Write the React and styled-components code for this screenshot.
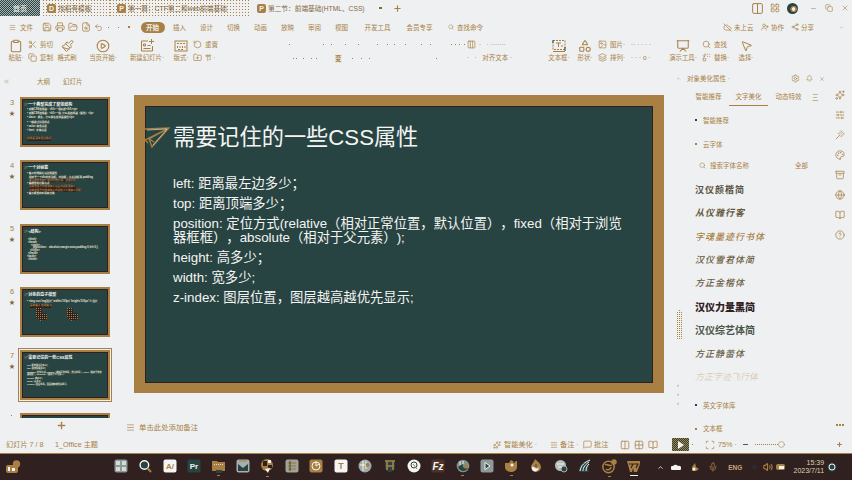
import React from "react";
import styled, { createGlobalStyle, css } from "styled-components";
import {
  Scissors, Copy, Clipboard, Paintbrush, CirclePlay, Save, Printer, FolderOpen, FileSearch, Undo2,
  Search, Settings, Bell, X, Minus, Plus, Presentation, MousePointer2, Image, Layers, Replace,
  CloudOff, UserPlus, Share2, Sparkles, SlidersHorizontal, Shapes, ChevronsLeft, ChevronUp,
  LayoutTemplate, RotateCcw, FolderPlus, LayoutGrid, Grid2x2, BookOpen, Columns2, Scan,
  MessageSquare, Palette, Archive, Globe, CircleHelp, Mic, Volume2, Wand, Circle, Menu, Wifi,
  Columns3,
} from "lucide-react";

const c = { bg: "#eef0f2", gold: "#a98044", teal: "#284442", dark: "#30201f", white: "#f4f4f3" };

const Global = createGlobalStyle`
  * { box-sizing: border-box; }
  body { margin: 0; overflow: hidden; background: ${c.bg}; }
  svg { display: block; flex: none; }
`;

const check = (a) => `repeating-conic-gradient(${a} 0 25%, transparent 0 50%) 0 0 / 2px 2px`;
const dots = (a, s) => `conic-gradient(from 0deg at 1px 1px, transparent 75%, ${a} 0) 0 0 / ${s}px ${s}px`;

const Window = styled.div`
  width: 852px; height: 480px; display: flex; flex-direction: column; overflow: hidden;
  background: ${c.bg}; color: ${c.gold};
  font: 6.5px/9px "Liberation Sans", "Noto Sans CJK SC", sans-serif; white-space: nowrap;
`;
const Row = styled.div`display: flex; align-items: center; flex: none; height: ${(p) => p.$h}px; margin-left: ${(p) => p.$ml || 0}px;`;
const Spacer = styled.div`flex: 1;`;
const Cell = styled.div`
  display: flex; align-items: center; flex: none; gap: ${(p) => p.$gap || 0}px;
  width: ${(p) => p.$w}px; margin-left: ${(p) => p.$ml || 0}px;
`;
const Dot = styled.i`width: ${(p) => p.$s || 1}px; height: ${(p) => p.$s || 1}px; flex: none; background: ${(p) => p.$c || c.gold}; margin-left: ${(p) => p.$ml || 0}px;`;

/* title bar */
const TitleBar = styled(Row)`height: 16px;`;
const HomeTab = styled.div`
  width: 40px; height: 16px; display: flex; align-items: center; justify-content: center; color: ${c.white};
  font-size: 7px; background: ${check(c.teal)}, #a9b3b4;
`;
const DocTab = styled.div`
  display: flex; align-items: center; gap: 2px; height: 16px; width: ${(p) => p.$w}px; margin-left: ${(p) => p.$ml || 0}px; padding-left: ${(p) => p.$pl}px; flex: none; font-size: 6.7px;
  background: ${(p) => (p.$idle ? dots(c.gold, 3) : "none")};
  & span { color: #85683f; }
`;
const FileMark = styled.b`
  width: 9px; height: 9px; border-radius: 2px; background: ${c.gold}; color: ${c.bg}; font-size: 7px; line-height: 9px; text-align: center; flex: none;
`;
const Avatar = styled.i`width: 11px; height: 11px; border-radius: 50%; background: radial-gradient(circle at 60% 55%, ${c.bg} 0 1.5px, ${c.gold} 2px 3px, ${c.teal} 3.5px); flex: none; margin-left: 7px;`;

/* menu */
const MenuTab = styled.div`
  width: ${(p) => p.$w || 27}px; height: 12px; display: flex; align-items: center; justify-content: center; flex: none;
  & span { ${(p) => p.$on && css`width: 24px; height: 11px; line-height: 11px; border-radius: 6px; text-align: center; background: ${c.gold}; color: ${c.bg}; font-weight: bold;`} }
`;

/* ribbon */
const Ribbon = styled.div`display: flex; height: 29px; flex: none; padding-top: 1px;`;
const BigTool = styled.div`
  display: flex; flex-direction: column; align-items: center; width: ${(p) => p.$w}px; margin-left: ${(p) => p.$ml || 0}px; flex: none; font-size: 6.4px;
  & svg { height: 14px; }
`;
const Stack = styled.div`display: flex; flex-direction: column; gap: 4px; width: ${(p) => p.$w}px; margin-left: ${(p) => p.$ml || 0}px; flex: none; padding-top: 1px;`;
const SmallTool = styled.div`display: flex; align-items: center; height: 9px; gap: 3px; & svg { width: 9px; height: 9px; }`;
const FontArea = styled.div`width: 260px; margin-left: 48px; flex: none; display: flex; flex-direction: column; gap: 5px; padding-top: 1px;`;
const Faint = styled.div`display: flex; align-items: center; height: 9px;`;

/* body */
const Body = styled.div`display: flex; flex: 1; min-height: 0;`;
const Outline = styled.div`width: 134px; display: flex; flex-direction: column; flex: none; height: 366px;`;
const ThumbRow = styled.div`display: flex; height: ${(p) => p.$h || 63.3}px; flex: none; overflow: ${(p) => (p.$on ? "visible" : "hidden")};`;
const ThumbNo = styled.div`
  width: 20px; padding: 2px 0 0 10px; color: ${c.gold}; font-size: 7.5px; display: flex; flex-direction: column; gap: 2px; line-height: 8px; flex: none;
  & small { font-size: 6px; margin-left: -1px; color: #85683f; }
`;
const Thumb = styled.div`
  width: 90px; height: 50px; border: 2px solid ${c.gold}; background: ${c.teal}; box-shadow: inset 0 0 0 1px ${c.dark}${(p) => (p.$on ? `, 0 0 0 1px ${c.bg}, 0 0 0 2px ${c.gold}` : "")};
  padding: 3px 0 0 2px; overflow: hidden; flex: none; color: ${c.white}; margin-top: 0.5px;
`;
const ThumbTitle = styled.div`display: flex; align-items: center; font-size: 4px; line-height: 6px; height: 6px; margin-bottom: ${(p) => p.$mb || 0}px; font-weight: bold;`;
const ThumbLine = styled.div`
  font-size: ${(p) => (p.$small ? 2.2 : 2.6)}px; line-height: 4px; height: ${(p) => p.$h || 4.2}px; font-weight: bold; margin-left: ${(p) => 3 + (p.$in || 0)}px; color: ${(p) => (p.$dim ? c.gold : "#f0e6d8")};
  & span { display: inline-block; ${(p) => p.$dim && css`background: ${c.dark}; line-height: 3.6px;`} }
`;
const Figure = styled.div`display: flex; gap: 20px; padding: 1px 0 0 12px; & i { width: 11px; height: 13px; clip-path: polygon(0 0, 50% 0, 55% 40%, 100% 40%, 100% 85%, 40% 100%, 0 70%); background: ${dots(c.gold, 2)}, ${c.dark}; }`;
const AddSlide = styled.div`display: flex; justify-content: center; width: 122px; height: 18px; align-items: center;`;

const Center = styled.div`width: 538px; display: flex; flex-direction: column; flex: none; padding-top: 28px;`;
const Slide = styled.div`
  width: 530px; height: 298px; border: solid ${c.gold}; border-width: 11px 11px 10px 11px; background: ${c.teal};
  box-shadow: inset 0 0 0 1px ${c.dark}; color: ${c.white}; flex: none;
`;
const SlideTitle = styled.div`display: flex; align-items: center; height: 30px; margin-top: 17px; font-size: 22.2px; line-height: 30px; text-spacing-trim: space-all; & svg { margin-right: 3px; }`;
const SlideBody = styled.div`margin: 24px 0 0 28px; font-size: 13.33px; line-height: 14px; text-spacing-trim: space-all; & p { margin: 0 0 6px; }`;
const Notes = styled(Row)`padding-top: 5px; font-size: 7.4px; gap: 4px; margin-left: -8px;`;

/* right panel */
const Side = styled.div`width: 176px; display: flex; flex-direction: column; flex: none; margin-top: 4px;`;
const SideTabs = styled.div`display: flex; height: 18px; margin: 2px 0 0 17px;`;
const SideTab = styled.div`width: 39px; margin-right: 1px; text-align: center; line-height: 17px; flex: none; border-bottom: ${(p) => (p.$on ? `1px solid ${c.gold}` : "0")};`;
const SideBody = styled.div`display: flex; flex: 1;`;
const Gutter = styled.div`width: 23px; padding-left: 5px; flex: none;`;
const ScrollThumb = styled.div`width: 5px; height: 30px; margin-top: 204px; border-radius: 3px; background: ${dots(c.gold, 2)};`;
const Ticks = styled.div`display: flex; flex-direction: column; gap: 2px; margin-top: 42px; line-height: 7px; font-size: 6px;`;
const List = styled.div`width: 138px; flex: none; padding-top: 2.5px;`;
const Section = styled.div`display: flex; align-items: center; gap: 6px; height: 23.7px;`;
const SearchRow = styled.div`display: flex; align-items: center; height: 20px; padding-left: 4px; margin-bottom: 3px;`;
const Fonts = styled.div`margin-bottom: 4px;`;
const FontItem = styled.div`
  height: 23.4px; line-height: 23.4px; padding-left: 0; font-size: ${(p) => p.$s || 9}px; letter-spacing: ${(p) => p.$ls ?? 1}px;
  color: ${(p) => p.$c || "#6b5d43"}; font-weight: ${(p) => p.$b || 500}; font-style: ${(p) => (p.$i ? "italic" : "normal")};
`;
const Rail = styled.div`width: 12px; height: 336px; display: flex; flex-direction: column; align-items: center; gap: 10px; margin: -16px 0 0 1px; flex: none;`;

/* status bar */
const Status = styled(Row)`height: 17px; font-size: 7.2px;`;
const PlayButton = styled.div`width: 17px; height: 13px; margin-left: 12px; display: grid; place-items: center; background: ${check(c.teal)}, ${c.gold}; flex: none;`;
const SliderLine = styled.i`width: 23px; height: 1px; background: ${dots(c.gold, 2)}; flex: none;`;

/* taskbar */
const Taskbar = styled.div`height: 27px; flex: none; display: flex; align-items: center; background: ${c.dark}; border-top: 1px solid ${c.gold}; color: ${c.white};`;
const TaskApps = styled.div`display: flex; margin-left: 84.5px;`;
const TaskApp = styled.div`
  width: 24.45px; height: 26px; display: flex; flex-direction: column; align-items: center; justify-content: center; flex: none; padding-bottom: 2px;
  &::after { content: ""; width: ${(p) => (p.$run ? (p.$on ? 8 : 3) : 0)}px; height: 1px; margin: 2px 0 -3px; background: ${(p) => (p.$on ? c.white : c.gold)}; }
`;
const Eng = styled.span`color: #c4a67b; font-size: 6.5px; font-weight: bold;`;
const Clock = styled.div`width: 36px; margin-left: 2px; text-align: right; font-size: 7px; line-height: 8.5px; color: #dfd0b8;`;

const ic = (size = 9) => ({ size, color: c.gold, strokeWidth: 1.8 });

const Plane = ({ s = 1 }) => (
  <svg width={25 * s} height={22 * s} viewBox="0 0 25 22" fill="none" stroke={c.gold} strokeWidth="1.3">
    <path d="M0 2 24 1 7 20 4 12 24 1M0 13 24 1M0 13l3 3M4 12l5 3" />
    <path d="M2 3 22 2 8 18" stroke="#e7d7bd" strokeWidth=".7" />
  </svg>
);

const TextBoxIcon = () => (
  <svg width="14" height="14" viewBox="0 0 14 14" fill="none" stroke={c.gold}>
    <rect x="1" y="1.500" width="12" height="9" strokeDasharray="2 1" /><path d="M4 4h5M6.500 4v4M9 7h2M1 12.500h12" /><path d="M1 1v3M13 8v4" stroke={c.teal} />
  </svg>
);
const NewSlideIcon = () => (
  <svg width="14" height="14" viewBox="0 0 14 14" fill="none" stroke={c.gold}>
    <path d="M8 2H1.500v10h11V7M11.500 0v5M9 2.500h5M3.500 5h2v2h-2zM7.500 6.500h3M3.500 9.500h7" />
  </svg>
);
const LayoutIcon = () => (
  <svg width="14" height="14" viewBox="0 0 14 14" fill="none" stroke={c.gold}>
    <rect x="1" y="2" width="12" height="10" /><path d="M3 4.500h8M3.500 7v3M6 7v3M8.500 7v3M11 7v3M4 10.500h6" strokeDasharray="2 1" />
  </svg>
);

const G = c.gold, W = c.white, T = c.teal, K = c.dark;
const Tile = ({ fill, children, round }) => (
  <svg width="14" height="14" viewBox="0 0 14 14"><rect x=".5" y=".5" width="13" height="13" rx={round ? 6.5 : 2} fill={fill} />{children}</svg>
);
const Letter = ({ t, fill, size = 8 }) => (
  <text x="7" y="9.8" textAnchor="middle" fontFamily="Liberation Sans, sans-serif" fontWeight="bold" fontSize={size} fill={fill}>{t}</text>
);

const apps = [
  { el: <Tile fill="#8d9a98"><path d="M2 2h4v4H2zM8 2h4v4H8zM2 8h4v4H2zM8 8h4v4H8z" fill="#d4dad8" /></Tile> },
  { el: <svg width="14" height="14" viewBox="0 0 14 14" fill={T} stroke={W} strokeWidth="1.4"><circle cx="6.4" cy="6" r="4.3" /><path d="M9.5 9.2 13 13" stroke={G} strokeWidth="2" /></svg> },
  { el: <Tile fill={W}><Letter t="A/" fill={G} /></Tile> },
  { el: <Tile fill={T}><Letter t="Pr" fill={W} /></Tile> },
  { run: 1, el: <svg width="15" height="14" viewBox="0 0 15 14"><path d="M1 2h5l1 1h7v9H1z" fill={G} /><path d="M5 11h6v3H5z" fill={T} /><path d="M3 5.500h9" stroke="#e7d7bd" strokeDasharray="1 1" /></svg> },
  { el: <Tile fill="#a6b0ae"><path d="m2 5 5 4 5-4v7H2z" fill={T} /><path d="M3 2h8" stroke={G} /></Tile> },
  { run: 1, el: <svg width="14" height="16" viewBox="0 0 14 16"><circle cx="7" cy="7" r="6" fill={G} /><path d="M3 3h4v5H3zM8 7h4v3H8z" fill={K} /><path d="m5 11 5-1-2 5z" fill={W} /><path d="M8 2h3v3H8z" fill={W} /></svg> },
  { el: <Tile fill="#9fa49b"><path d="M3 4h8M3 7h8M3 10h8" stroke={G} strokeWidth="1.4" /><path d="M5 2v10" stroke={T} /></Tile> },
  { el: <Tile fill={G}><circle cx="7" cy="7" r="4" fill="none" stroke={W} /><path d="M7 2v5l3-2" stroke={W} fill="none" /></Tile> },
  { el: <Tile fill={W}><Letter t="T" fill={G} size={9} /></Tile> },
  { el: <Tile fill="#9fa9a6" round><path d="M5 2v10M8 2v8M2 6h9" stroke={W} /><circle cx="9.5" cy="6" r="2" fill={G} /></Tile> },
  { el: <svg width="14" height="14" viewBox="0 0 14 14"><path d="M2 1h10v7c0 3-3 5-5 5s-5-2-5-5z" fill={T} /><path d="M2 2h10M3.5 7h7M4 2v9M10 2v9" stroke={G} strokeWidth="1.6" /></svg> },
  { el: <Tile fill={W} round><circle cx="7" cy="6" r="3" fill="none" stroke={T} /><path d="m6 5 4 5" stroke={G} /></Tile> },
  { el: <Tile fill="#4c3228"><text x="7" y="10.5" textAnchor="middle" fontFamily="Liberation Sans, sans-serif" fontStyle="italic" fontWeight="bold" fontSize="10" fill={W}>Fz</text></Tile> },
  { run: 1, el: <svg width="14" height="14" viewBox="0 0 14 14"><circle cx="7" cy="7" r="6.3" fill="#81918e" /><path d="M2 8c2 5 8 5 10 1-4 1-6-1-5-4z" fill={T} /><circle cx="9.5" cy="7.5" r="2" fill={G} /><path d="M4 2v4M7 2v3" stroke={W} /></svg> },
  { el: <Tile fill="#8d9a98"><path d="M5 3.5 10 7l-5 3.5z" fill={T} stroke={W} /></Tile> },
  { run: 1, el: <svg width="15" height="14" viewBox="0 0 15 14"><path d="M1 4h4l2-3 3 2 3-1v6c0 3-3 5-6 5S1 11 1 8z" fill={G} /><circle cx="8" cy="6" r="1.500" fill={W} /><circle cx="10" cy="3" r="1" fill={T} /></svg> },
  { el: <svg width="14" height="14" viewBox="0 0 14 14"><path d="M6 0c5 4 6 6 6 8a5 5 0 0 1-10 0c0-3 3-4 4-8z" fill={G} /><path d="M3 8c2-1 4 3 6 1s0 4-3 3.5-3-2-3-4.5" fill={W} /><path d="M7 5v3" stroke={T} /></svg> },
  { el: <svg width="14" height="14" viewBox="0 0 14 14"><circle cx="6.5" cy="6.5" r="5.5" fill="#b5bebc" /><circle cx="10" cy="10" r="3" fill={T} stroke="#a8b1af" /><path d="M3 5h7M4 8h4" stroke={W} /></svg> },
  { el: <svg width="14" height="14" viewBox="0 0 14 14"><path d="M1 13C1 6 5 1 13 1c-3 3-3 8-2 12z" fill={T} /><path d="M2 12C3 6 7 3 12 1M5 12c0-4 3-7 6-9M8 12c0-3 1-5 3-7" stroke={W} fill="none" /></svg> },
  { run: 1, el: <svg width="15" height="15" viewBox="0 0 15 15" fill="none" stroke={G} strokeWidth="1.5"><circle cx="6.5" cy="8" r="5.7" /><path d="M4 10c2 2 5 0 5-2" /><path d="M3 6c2-2 4 2 7 0" /><circle cx="12" cy="3" r="2" fill={G} /></svg> },
  { run: 1, on: 1, el: <svg width="15" height="14" viewBox="0 0 15 14"><path d="M1 2h13v3l-3 8H8L7 9l-1 4H4z" fill={G} /><path d="M3 5h4l-2 4M8 5h4l-2 4" stroke={K} fill="none" strokeWidth="1.2" /></svg> },
];

const thumbs = [
  { n: 3, title: "一个典型完成了整体结构", mb: 0, lines: [["• 对照CSS选择器：<h1>一级标题</h1><p>"], ["• 对照CSS选择器：<h1>一级, 什么是选择器（属性）</p>"], ["• class：类名，什么类名选择器属性</p>"], ["• 一般通过引用样式"], ["• color: 颜色设置"], ["• font：字体设置"], ["", 0], ["选择器    基本语法格式", 1, 0]] },
  { n: 4, title: "一个对标签", mb: 1, lines: [["• 盒子的理解方法边框属性", 0, 0, 3.4], ["相对于一个div的外边距，内边距，左右边距等 padding", 0, 2, 3.2], ["盒子模型的四个部分内容区域、边框区域", 1, 2, 3.2], ["• 盒模型的计算方式", 0, 0, 3.2], ["总宽度等于内容宽加上左右内边距再加上", 1, 2, 3.4], ["总高度等于内容高加上内边距上下再加上边框", 1, 2, 3.4], ["• 盒子模型的应用和分类", 0, 0, 3.2]] },
  { n: 5, title: "<结构>", mb: 3, lines: [["<html>", 0, 1, 3], ["<head>", 0, 1, 3], ["<style>", 0, 4, 2.6], ["p{position：    absolute;margin:auto;padding:0;left:0;}", 0, 6, 3.3], ["</style>", 0, 3, 2.8], ["</head>", 0, 1, 3], ["<body>", 0, 0, 3.2], ["</html>", 0, 1, 3]] },
  { n: 6, title: "对象的盒子模型", mb: 2, lines: [["• <img src='img/图片' width='100px' height='100px' /> 图片"], ["基本盒子           选择盒子", 1, 3, 3]], fig: 1 },
  { n: 7, on: 1, title: "需要记住的一些CSS属性", mb: 2, lines: [["left: 距离最左边多少；", 0, 0, 3.3], ["top: 距离顶端多少；", 0, 0, 3.3], ["position: 定位方式(relative（相对正常位置，默认位置），fixed（相对于浏览", 0, 0, 2.4], ["器框框），absolute（相对于父元素）);", 0, 0, 3.4], ["height: 高多少；", 0, 0, 3.3], ["width: 宽多少;", 0, 0, 3.3], ["z-index: 图层位置，图层越高越优先显示;", 0, 0, 3.3]] },
];

const fonts = [
  { t: "汉仪颜楷简", c: "#5b5342", b: 700 }, { t: "从仪雅行客", i: 1, b: 700, c: "#66573b" }, { t: "字魂墨迹行书体", c: c.gold, i: 1 },
  { t: "汉仪雪君体简", i: 1 }, { t: "方正金楷体", i: 1 }, { t: "汉仪力量黑简", b: 900, s: 10, ls: 0, c: K }, { t: "汉仪综艺体简", b: 700, s: 10, ls: 0, c: "#4a5548" },
  { t: "方正静蕾体", i: 1 }, { t: "方正字迹飞行体", c: "#d5bf9d", i: 1, ls: 0, b: 300 },
];

const Speck = ({ xs }) => <Faint>{xs.map((x, i) => <Dot key={i} $ml={x} />)}</Faint>;

export default function App() {
  return (
    <Window>
      <Global />
      <TitleBar $h={16}>
        <HomeTab>首页</HomeTab>
        <DocTab $idle $w={67} $ml={3} $pl={4}><FileMark>D</FileMark><span>找稻壳模板</span></DocTab>
        <DocTab $idle $w={140} $pl={7}><FileMark>P</FileMark><span>第一篇：CTF第二和web前端基础</span></DocTab>
        <DocTab $w={124} $pl={7}><FileMark>P</FileMark><span>第二节：前端基础(HTML、CSS)</span></DocTab>
        <Dot $s={2.5} $ml={5} $c="#85683f" />
        <Cell $w={10} $ml={11}><Plus {...ic(9)} strokeWidth={3} /></Cell>
        <Spacer />
        <Columns2 {...ic(13)} /><Cell $w={10} $ml={6}><LayoutGrid {...ic(10)} /></Cell><Avatar />
        <Cell $w={8} $ml={12}><Minus {...ic(7)} /></Cell><Cell $w={8} $ml={7}><Copy {...ic(8)} /></Cell><Cell $w={8} $ml={8}><X {...ic(8)} /></Cell><Cell $w={3} />
      </TitleBar>

      <Row $h={22}>
        <Cell $w={27} $ml={9} $gap={4}><Menu {...ic(7)} />文件</Cell>
        <Cell $w={66} $ml={6} $gap={3}><Save {...ic(10)} /><Printer {...ic(10)} /><FolderOpen {...ic(10)} /><FileSearch {...ic(10)} /><Undo2 {...ic(9)} /></Cell>
        <Cell $w={31} $gap={9}><Dot /><Dot /><Dot $s={2} /></Cell>
        {["开始", "插入", "设计", "切换", "动画", "放映", "审阅", "视图"].map((t, i) => <MenuTab key={t} $on={i === 0}><span>{t}</span></MenuTab>)}
        <MenuTab $w={45}>开发工具</MenuTab><MenuTab $w={39}>会员专享</MenuTab>
        <Cell $w={44} $ml={9} $gap={3}><Search {...ic(6)} />查找命令</Cell>
        <Spacer />
        <Cell $w={38} $gap={2}><CloudOff {...ic(9)} />未上云</Cell>
        <Cell $w={30} $gap={2}><UserPlus {...ic(8)} />协作</Cell>
        <Cell $w={24} $gap={2}><Share2 {...ic(8)} />分享</Cell>
        <Cell $w={13} $ml={24}><ChevronUp {...ic(5)} /></Cell>
      </Row>

      <Ribbon>
        <BigTool $w={20} $ml={6}><Clipboard {...ic(14)} />粘贴·</BigTool>
        <Stack $w={28} $ml={2}><SmallTool><Scissors {...ic(9)} />剪切</SmallTool><SmallTool><Copy {...ic(9)} />复制</SmallTool></Stack>
        <BigTool $w={22}><Paintbrush {...ic(13)} />格式刷</BigTool>
        <BigTool $w={32} $ml={9}><CirclePlay {...ic(14)} />当页开始·</BigTool>
        <BigTool $w={40} $ml={8}><NewSlideIcon />新建幻灯片·</BigTool>
        <BigTool $w={22} $ml={3}><LayoutIcon />版式·</BigTool>
        <Stack $w={26} $ml={1}><SmallTool><RotateCcw {...ic(9)} />重置</SmallTool><SmallTool><FolderPlus {...ic(9)} />节 ·</SmallTool></Stack>
        <FontArea>
          <Speck xs={[22, 33, 7, 13, 12, 18, 9, 6, 10, 15, 8, 20, 3, 3, 4]} />
          <Faint><Dot $ml={26} /><Dot $ml={2} /><Dot $ml={6} /><Dot $ml={7} /><Dot $ml={4} /><Cell $w={10} $ml={18}><b>变</b></Cell><Dot $ml={7} /><Dot $ml={8} /><Dot $ml={7} /><Dot $ml={66} /></Faint>
        </FontArea>
        <Stack $w={63} $ml={-60}><SmallTool><Columns3 {...ic(7)} />· &nbsp; · ·······</SmallTool><SmallTool>· &nbsp; · &nbsp; 对齐文本 ·</SmallTool></Stack>
        <BigTool $w={26} $ml={16}><TextBoxIcon />文本框·</BigTool>
        <BigTool $w={22} $ml={2}><Shapes {...ic(14)} />形状·</BigTool>
        <Stack $w={33} $ml={2}><SmallTool><Image {...ic(9)} />图片·</SmallTool><SmallTool><Layers {...ic(9)} />排列·</SmallTool></Stack>
        <Stack $w={32}><SmallTool>·· · · · ·</SmallTool><SmallTool>· · · ο ·</SmallTool></Stack>
        <BigTool $w={34} $ml={3}><Presentation {...ic(14)} />演示工具·</BigTool>
        <Stack $w={32} $ml={2}><SmallTool><Search {...ic(9)} />查找</SmallTool><SmallTool><Replace {...ic(9)} />替换·</SmallTool></Stack>
        <BigTool $w={24}><MousePointer2 {...ic(13)} />选择·</BigTool>
      </Ribbon>

      <Body>
        <Outline>
          <Row $h={29.5}><Cell $w={34} $ml={3}><ChevronsLeft {...ic(7)} /></Cell><Cell $w={26}>大纲</Cell><Cell $w={30}>幻灯片</Cell></Row>
          {thumbs.map((t) => (
            <ThumbRow key={t.n} $on={t.on}>
              <ThumbNo><span>{t.n}</span><small>★</small></ThumbNo>
              <Thumb $on={t.on}>
                <ThumbTitle $mb={t.mb}><Plane s={0.17} />{t.title}</ThumbTitle>
                {t.lines.map(([s, dim, indent, h], i) => <ThumbLine key={i} $small={t.on} $dim={dim} $in={indent} $h={h}><span>{s}</span></ThumbLine>)}
                {t.fig && <Figure><i /><i /></Figure>}
              </Thumb>
            </ThumbRow>
          ))}
          <ThumbRow $h={5}><ThumbNo><Dot $ml={1} /></ThumbNo><Thumb /></ThumbRow>
          <AddSlide><Plus {...ic(11)} strokeWidth={2.8} /></AddSlide>
        </Outline>

        <Center>
          <Slide>
            <SlideTitle><Plane />需要记住的一些CSS属性</SlideTitle>
            <SlideBody>
              <p>left: 距离最左边多少；</p>
              <p>top: 距离顶端多少；</p>
              <p>position: 定位方式(relative（相对正常位置，默认位置），fixed（相对于浏览<br />器框框），absolute（相对于父元素）);</p>
              <p>height: 高多少；</p>
              <p>width: 宽多少;</p>
              <p>z-index: 图层位置，图层越高越优先显示;</p>
            </SlideBody>
          </Slide>
          <Notes $h={63}>
            <Menu {...ic(9)} />单击此处添加备注
          </Notes>
        </Center>

        <Side>
          <Row $h={15}><Cell $w={11} $ml={4}><ChevronUp {...ic(5)} /></Cell><Cell $w={45}>对象美化属性 ·</Cell>
            <Cell $w={34} $ml={59} $gap={6}><Settings {...ic(9)} /><Bell {...ic(7)} /><X {...ic(6)} /></Cell></Row>
          <SideTabs><SideTab>智能推荐</SideTab><SideTab $on>文字美化</SideTab><SideTab>动态特效</SideTab><Cell $w={10} $ml={3}>三</Cell></SideTabs>
          <SideBody>
            <Gutter><ScrollThumb /><Ticks><span>‹</span><span>›</span><span>‹</span></Ticks></Gutter>
            <List>
              <Section><Dot $s={2} $c={T} />智能推荐</Section>
              <Section><Dot $s={2} />云字体</Section>
              <SearchRow><Search {...ic(7)} /><Cell $w={85} $ml={4}>搜索字体名称</Cell>全部</SearchRow>
              <Fonts>{fonts.map((f) => <FontItem key={f.t} $c={f.c} $b={f.b} $s={f.s} $ls={f.ls} $i={f.i}>{f.t}</FontItem>)}</Fonts>
              <Section><Dot $s={2} $c={T} />英文字体库</Section>
              <Section><Dot $s={2} />文本框</Section>
            </List>
            <Rail>
              <Sparkles {...ic(10)} /><SlidersHorizontal {...ic(10)} /><Wand {...ic(10)} /><Palette {...ic(10)} /><Archive {...ic(10)} /><Globe {...ic(10)} /><BookOpen {...ic(10)} /><CircleHelp {...ic(10)} />
              <Spacer /><Cell $w={9} $gap={1}><Dot $s={2} /><Dot $s={2} /><Dot $s={2} /></Cell>
            </Rail>
          </SideBody>
        </Side>
      </Body>

      <Status $h={17}>
        <Cell $w={49} $ml={6}>幻灯片 7 / 8</Cell><Cell $w={50}>1_Office 主题</Cell>
        <Cell $w={53} $ml={388} $gap={3}><Sparkles {...ic(8)} />智能美化 ·</Cell>
        <Cell $w={32} $ml={4} $gap={2}><Menu {...ic(8)} />备注 ·</Cell>
        <Cell $w={30} $ml={1} $gap={2}><MessageSquare {...ic(9)} />批注</Cell>
        <Cell $w={40} $ml={7} $gap={4}><Columns2 {...ic(10)} /><Grid2x2 {...ic(10)} /><BookOpen {...ic(10)} /></Cell>
        <PlayButton><svg width="6" height="8" viewBox="0 0 6 8"><path d="M0 0 6 4 0 8z" fill={W} /></svg></PlayButton>
        <Dot $ml={3} /><Cell $w={37} $ml={12} $gap={3}><Scan {...ic(10)} />75% ·</Cell>
        <Cell $w={8}><Minus {...ic(7)} color={T} strokeWidth={3} /></Cell>
        <Cell $w={31} $ml={5}><SliderLine /><Circle {...ic(7)} /></Cell>
        <Spacer /><Cell $w={16}><Plus {...ic(7)} strokeWidth={3.5} /></Cell>
      </Status>

      <Taskbar>
        <Cell $w={18} $ml={6}><svg width="15" height="14" viewBox="0 0 15 14"><circle cx="10.5" cy="4" r="3.7" fill={G} /><rect x="0" y="5" width="12" height="8" rx="2" fill={G} /><path d="M2 7h2v4H2zM6 8h3v3H6z" fill={W} /></svg></Cell>
        <TaskApps>{apps.map((a, i) => <TaskApp key={i} $run={a.run} $on={a.on}>{a.el}</TaskApp>)}</TaskApps>
        <Cell $w={14} $ml={11}><ChevronUp size={7} color="#e7d7bd" strokeWidth={3} /></Cell>
        <Cell $w={21}><svg width="10" height="6" viewBox="0 0 10 6"><path d="M1 6a2 2 0 0 1 1-4 3 3 0 0 1 5 0 2 2 0 0 1 2 4z" fill={W} /></svg></Cell>
        <Cell $w={16}><svg width="7" height="8" viewBox="0 0 7 8"><path d="M3 0 4 4 7 6 4 8H0V4z" fill={G} /><circle cx="2" cy="6" r="1.5" fill={W} /></svg></Cell>
        <Cell $w={20}><Mic {...ic(10)} /></Cell>
        <Cell $w={23}><Eng>ENG</Eng></Cell>
        <Cell $w={12}><Wifi size={7} color={T} /></Cell>
        <Cell $w={13}><Volume2 {...ic(10)} strokeWidth={2.6} /></Cell>
        <Cell $w={10}><svg width="10" height="8" viewBox="0 0 10 8"><rect y="1" width="9" height="6" rx="2" fill={G} /><path d="M3 3h5v3H3z" fill={W} /></svg></Cell>
        <Clock>15:39<br />2023/7/11</Clock>
        <Cell $w={12} $ml={3}><svg width="10" height="10" viewBox="0 0 10 10"><circle cx="5" cy="5" r="4.5" fill={T} /><circle cx="5" cy="5" r="3" fill="none" stroke={W} /></svg></Cell>
      </Taskbar>
    </Window>
  );
}
